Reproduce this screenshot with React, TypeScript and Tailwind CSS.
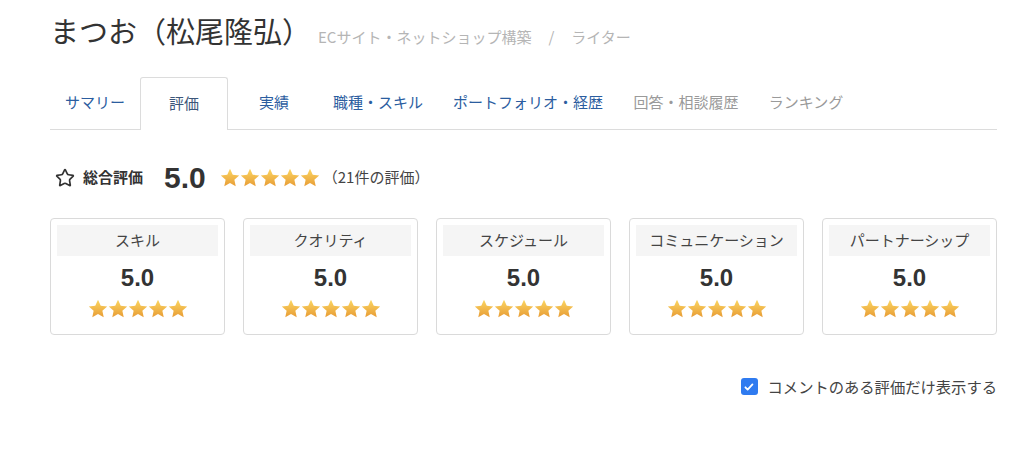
import { Star } from 'lucide-react';

const font = { fontFamily: '"Noto Sans CJK JP", "Noto Sans", sans-serif' };

const tabs = [
  { label: 'サマリー', w: 'w-[90px]', tone: 'link' },
  { label: '評価', w: 'w-[88px]', tone: 'active' },
  { label: '実績', w: 'w-[92px]', tone: 'link' },
  { label: '職種・スキル', w: 'w-[116px]', tone: 'link' },
  { label: 'ポートフォリオ・経歴', w: 'w-[184px]', tone: 'link' },
  { label: '回答・相談履歴', w: 'w-[132px]', tone: 'muted' },
  { label: 'ランキング', w: 'w-[108px]', tone: 'muted' },
];

const categories = ['スキル', 'クオリティ', 'スケジュール', 'コミュニケーション', 'パートナーシップ'];

function GoldStar() {
  return (
    <svg viewBox="0 0 24 24" className="h-[20px] w-[20px]">
      <path
        d="M12 1l3.3 7.1 7.7.85-5.75 5.2 1.6 7.6L12 17.9l-6.85 3.85 1.6-7.6L1 8.95l7.7-.85z"
        fill="url(#gold)"
      />
    </svg>
  );
}

function Stars() {
  return (
    <div className="flex items-center">
      {[0, 1, 2, 3, 4].map((i) => (
        <GoldStar key={i} />
      ))}
    </div>
  );
}

export default function App() {
  return (
    <div className="min-h-[461px] bg-white text-[#333]" style={font}>
      <svg width="0" height="0" className="absolute">
        <defs>
          <linearGradient id="gold" x1="0" y1="0" x2="0" y2="1">
            <stop offset="0%" stopColor="#fbd662" />
            <stop offset="100%" stopColor="#e89d36" />
          </linearGradient>
        </defs>
      </svg>

      <div className="ml-[50px] w-[947px]">
        <div className="flex items-baseline pt-[12px]">
          <h1 className="text-[29px] leading-[36px] text-[#333]">まつお（松尾隆弘）</h1>
          <p className="ml-[7px] text-[15px] text-[#b5b5b5]">
            ECサイト・ネットショップ構築<span className="mx-[17px]">/</span>ライター
          </p>
        </div>

        <nav className="mt-[29px] flex h-[52px] items-end border-b border-[#dcdcdc]">
          {tabs.map((t) => (
            <div
              key={t.label}
              className={
                t.tone === 'active'
                  ? `${t.w} -mb-px flex h-[53px] items-center justify-center rounded-t-[3px] border border-b-0 border-[#dcdcdc] bg-white text-[15px] text-[#3c5679]`
                  : t.tone === 'link'
                    ? `${t.w} flex h-[52px] items-center justify-center text-[15px] text-[#2b5d9f]`
                    : `${t.w} flex h-[52px] items-center justify-center text-[15px] text-[#9a9a9a]`
              }
            >
              {t.label}
            </div>
          ))}
        </nav>

        <div className="mt-[33px] flex h-[30px] items-center">
          <Star className="ml-[5px] h-[20px] w-[20px] text-[#333]" strokeWidth={2} />
          <span className="ml-[8px] text-[15px] font-bold text-[#333]">総合評価</span>
          <span
            className="ml-[21px] text-[30px] font-bold leading-none text-[#333]"
            style={{ fontFamily: '"Liberation Sans", Arial, sans-serif' }}
          >
            5.0
          </span>
          <div className="ml-[14px]">
            <Stars />
          </div>
          <span className="ml-[3px] text-[15px] text-[#444]">（21件の評価）</span>
        </div>

        <div className="mt-[25px] grid grid-cols-5 gap-[18px]">
          {categories.map((c) => (
            <div
              key={c}
              className="flex h-[117px] flex-col items-center rounded-[4px] border border-[#dadada] p-[6px]"
            >
              <div className="flex h-[31px] w-full items-center justify-center bg-[#f5f5f5] text-[15px] text-[#444]">
                {c}
              </div>
              <div
                className="mt-[9px] text-[24px] font-bold leading-[26px] text-[#333]"
                style={{ fontFamily: '"Liberation Sans", Arial, sans-serif' }}
              >
                5.0
              </div>
              <div className="mt-[8px]">
                <Stars />
              </div>
            </div>
          ))}
        </div>

        <div className="mt-[42px] flex h-[20px] items-center justify-end">
          <span className="flex h-[17px] w-[17px] items-center justify-center rounded-[3px] bg-[#2f7bf0]">
            <svg viewBox="0 0 16 16" className="h-[12px] w-[12px]">
              <path d="M3.2 8.4l3 3 6.4-6.8" fill="none" stroke="#fff" strokeWidth="2.4" strokeLinecap="round" strokeLinejoin="round" />
            </svg>
          </span>
          <span className="ml-[10px] text-[15.3px] text-[#444]">コメントのある評価だけ表示する</span>
        </div>
      </div>
    </div>
  );
}
